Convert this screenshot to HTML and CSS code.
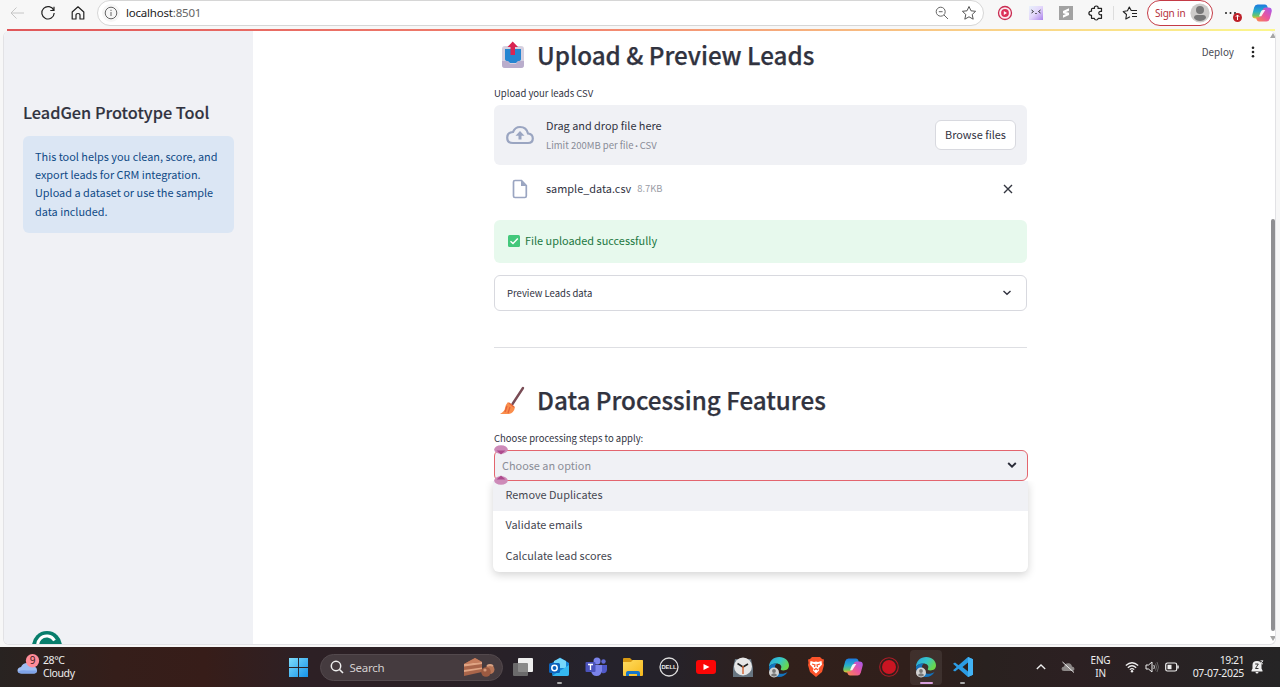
FILE: index.html
```
<!DOCTYPE html>
<html lang="en">
<head>
<meta charset="utf-8">
<title>LeadGen Prototype Tool</title>
<link rel="stylesheet" href="styles.css">
</head>
<body>
<svg class="defs" aria-hidden="true">
  <defs>
    <linearGradient id="edgeA" x1="0" y1="0" x2="1" y2=".5"><stop offset="0" stop-color="#2aa5e0"/><stop offset=".55" stop-color="#36c6c8"/><stop offset="1" stop-color="#6ad64b"/></linearGradient>
    <linearGradient id="cpA" x1="0" y1="0" x2="0" y2="1"><stop offset="0" stop-color="#1b78e0"/><stop offset=".5" stop-color="#28b0c8"/><stop offset=".8" stop-color="#6cc46a"/><stop offset="1" stop-color="#f0c52d"/></linearGradient>
    <linearGradient id="cpB" x1="1" y1="0" x2="0" y2="1"><stop offset="0" stop-color="#a259f2"/><stop offset=".5" stop-color="#e9559f"/><stop offset="1" stop-color="#f98a4b"/></linearGradient>
    <linearGradient id="win" x1="0" y1="0" x2="1" y2="1"><stop offset="0" stop-color="#7edcfb"/><stop offset="1" stop-color="#1593ea"/></linearGradient>
    <linearGradient id="folder" x1="0" y1="0" x2="1" y2="1"><stop offset="0" stop-color="#ffdc61"/><stop offset="1" stop-color="#f7b91c"/></linearGradient>
    <linearGradient id="ext" x1="0" y1="0" x2="1" y2="1"><stop offset="0" stop-color="#e9f1fb"/><stop offset=".5" stop-color="#e3d6fb"/><stop offset="1" stop-color="#ac83ec"/></linearGradient>
    <symbol id="edge" viewBox="0 0 22 22">
      <path d="M1 11C1 5 5.500 1 11.200 1C17 1 21 5 21 9.300C21 12.700 18.500 14.500 15.500 14.500C13 14.500 12.300 13.500 13 12.500C14.300 9.800 11.800 7.500 8.500 7.500C5 7.500 2 9 1 11Z" fill="url(#edgeA)"/>
      <path d="M1 11C2 8.500 5.500 6.800 8.800 7.600C6.500 9 6.300 13 8.500 15.500C11 18.400 15.500 18.500 19.500 16C17.500 19.500 14.500 21 11 21C5.200 21 1 16.500 1 11Z" fill="#1373bd"/>
      <circle cx="6" cy="16.500" r="5" fill="#d3d3d3"/><circle cx="6" cy="15" r="1.900" fill="#777"/><path d="M2.800 19Q6 15.500 9.200 19Q6 22 2.800 19" fill="#777"/>
    </symbol>
    <symbol id="copilot" viewBox="0 0 20 20">
      <path d="M5.500 1.500H13Q14.800 1.500 15.300 3.200L16 5.500H13.300Q11.800 5.500 11.200 7.300L9.300 13.200Q8.500 15.500 6.500 15.500H3.500Q-.3 15.500 .3 11.500L2.200 4.200Q3 1.500 5.500 1.500Z" fill="url(#cpA)"/>
      <path d="M14.500 18.500H7Q5.200 18.500 4.700 16.800L4 14.500H6.700Q8.200 14.500 8.800 12.700L10.700 6.800Q11.500 4.500 13.500 4.500H16.500Q20.300 4.500 19.700 8.500L17.800 15.800Q17 18.500 14.500 18.500Z" fill="url(#cpB)"/>
      <path d="M11 7H13.300L10.900 10.700L9.300 13.200H7L8.800 8.800Q9.500 7 11 7Z" fill="#fff" opacity=".9"/>
    </symbol>
  </defs>
</svg>

<header class="toolbar">
  <svg class="ic back" viewBox="0 0 16 16"><path d="M15 8H2M7.500 2.500L2 8L7.500 13.500" stroke="#c6c6c6"/></svg>
  <svg class="ic reload" viewBox="0 0 16 16"><path d="M13.700 5.300A6.200 6.200 0 1 0 14.200 8M14 1.800V5.500H10.300" stroke="#222" stroke-width="1.200"/></svg>
  <svg class="ic home" viewBox="0 0 16 16"><path d="M2.200 7L8 1.800L13.800 7V14H10V10.200Q10 8.500 8 8.500Q6 8.500 6 10.200V14H2.200Z" stroke="#222" stroke-width="1.200" stroke-linejoin="round"/></svg>
  <div class="address">
    <span class="info-bg"><svg class="ic info" viewBox="0 0 14 14"><circle cx="7" cy="7" r="5.800" stroke="#666"/><path d="M7 6V10M7 3.800V5" stroke="#666"/></svg></span>
    <span class="url">localhost<span class="port">:8501</span></span>
    <svg class="ic zoom" viewBox="0 0 14 14"><circle cx="5.700" cy="5.700" r="4.500" stroke="#666"/><path d="M9 9L13 13M3.800 5.700H7.600" stroke="#666"/></svg>
    <svg class="ic star" viewBox="0 0 16 16"><path d="M8 1.500L10 5.800L14.600 6.300L11.200 9.500L12.200 14.200L8 11.800L3.800 14.200L4.800 9.500L1.400 6.300L6 5.800Z" stroke="#555" stroke-linejoin="round"/></svg>
  </div>
  <div class="extensions">
    <svg class="ic e1" viewBox="0 0 16 16"><circle cx="8" cy="8" r="6.500" fill="#fbeaf0" stroke="#c92c51" stroke-width="1.300"/><circle cx="8" cy="8" r="3.900" fill="#dc2f57"/><path d="M6.800 6L10 8L6.800 10Z" fill="#fff"/></svg>
    <svg class="ic e2" viewBox="0 0 14 14"><rect width="14" height="14" fill="url(#ext)"/><path d="M2.500 4L4.500 5.500L2.500 7M11.500 4L9.500 5.500L11.500 7M6.300 7.500H7.700" stroke="#333"/></svg>
    <svg class="ic e3" viewBox="0 0 14 14"><rect width="14" height="14" fill="#a2a2a2"/><path d="M10 2.300V4.700L4 7.300V5ZM10 6.700V9L4 11.700V9.300ZM4 7.300L7 6L10 6.700L7 8Z" fill="#fff"/></svg>
    <svg class="ic e4" viewBox="0 0 16 16"><path d="M4.500 3.300H6.500Q6 1 8.300 1Q10.600 1 10 3.300H13.500V6.500Q10.800 6 10.800 8.100Q10.800 10.300 13.500 9.700V13.300H10.200Q10 15 8.300 15Q6.500 15 6.300 13.300H3.500V10.300Q.9 10.200 .9 8.200Q.9 6.200 3.500 6.200V4.300Q3.500 3.300 4.500 3.300Z" stroke="#222" stroke-width="1.200" stroke-linejoin="round"/></svg>
    <i class="divider"></i>
    <svg class="ic e5" viewBox="0 0 16 16"><path d="M8 11.800L3.800 14L4.500 9.500L1.200 6.500L5.500 5.800L7.300 2L9.200 5.500H15M10 8.500H15M10 11.500H15" stroke="#222" stroke-width="1.100" stroke-linejoin="round"/></svg>
    <div class="signin"><span>Sign in</span>
      <svg class="ic avatar" viewBox="0 0 20 20"><circle cx="10" cy="10" r="9.600" fill="#cdcbc9"/><circle cx="10" cy="7" r="4" fill="#777"/><path d="M4 15Q4 12 7 12H13Q16 12 16 15Q14 18 10 18Q6 18 4 15" fill="#777"/></svg>
    </div>
    <svg class="ic more" viewBox="0 0 18 16"><g fill="#222"><circle cx="2" cy="6" r="1"/><circle cx="6.500" cy="6" r="1"/><circle cx="11" cy="6" r="1"/></g><circle cx="13.500" cy="10.500" r="4.500" fill="#bd2029"/><path d="M13.500 13V8M11.800 9.800L13.500 8L15.200 9.800" stroke="#fff"/></svg>
    <svg class="ic copilot"><use href="#copilot"/></svg>
  </div>
</header>

<div class="frame">
  <div class="rainbow"></div>
  <div class="app">
    <aside class="sidebar">
      <h3 class="tool-title">LeadGen Prototype Tool</h3>
      <div class="note"><p>This tool helps you clean, score, and</p><p>export leads for CRM integration.</p><p>Upload a dataset or use the sample</p><p>data included.</p></div>
      <svg class="ic grammarly" viewBox="0 0 30 30"><circle cx="15" cy="15" r="15" fill="#087e6c"/><path d="M22.500 9.500A9 9 0 1 0 23.500 16H17.500" stroke="#fff" stroke-width="3"/></svg>
    </aside>
    <main class="main">
      <h2 class="section-title">
        <svg class="ic emoji" viewBox="0 0 26 28"><path d="M5 5H21Q24 5 24 8V24Q24 27 21 27H5Q2 27 2 24V8Q2 5 5 5Z" fill="#d6d0df"/><path d="M2 20H8L10 23H16L18 20H24V24Q24 27 21 27H5Q2 27 2 24Z" fill="#b9adcc"/><path d="M5 8H21V18Q21 20 18 20L16 22H10L8 20Q5 20 5 18Z" fill="#2585d1"/><path d="M12.700 .5L18 6H15V14H10.500V6H7.500Z" fill="#d92452"/></svg>
        <span>Upload &amp; Preview Leads</span>
      </h2>
      <p class="label">Upload your leads CSV</p>
      <div class="uploader">
        <svg class="ic cloud" viewBox="0 0 28 20"><path d="M7 18H22Q26.800 18 26.800 13.500Q26.800 9 22 8.500Q20.500 2 14 2Q9 2 7 7Q1.200 7.500 1.200 12.700Q1.200 18 7 18Z" stroke="#9aa5c1" stroke-width="2.200"/><path d="M14 6L9.500 10.800H12.500V14.500H15.500V10.800H18.500Z" fill="#9aa5c1"/></svg>
        <div class="drop-text"><p class="drop-main">Drag and drop file here</p><p class="drop-sub">Limit 200MB per file <span class="bullet">•</span> CSV</p></div>
        <button class="browse">Browse files</button>
      </div>
      <div class="file">
        <svg class="ic doc" viewBox="0 0 16 20"><path d="M3 1.500H9.500L14.300 6.500V17Q14.300 18.500 12.800 18.500H3Q1.500 18.500 1.500 17V3Q1.500 1.500 3 1.500Z" stroke="#9aa5c1" stroke-width="1.700"/><path d="M9 1.500V7H14.500Z" fill="#9aa5c1"/></svg>
        <span class="filename">sample_data.csv</span><span class="size">8.7KB</span>
        <svg class="ic close" viewBox="0 0 10 10"><path d="M1 1L9 9M9 1L1 9" stroke="#333640" stroke-width="1.400"/></svg>
      </div>
      <div class="success"><svg class="ic check" viewBox="0 0 12 12"><rect width="12" height="12" rx="1.500" fill="#43c87b"/><path d="M2.500 6.200L5 8.500L9.800 3.500" stroke="#fff" stroke-width="1.400"/></svg><span>File uploaded successfully</span></div>
      <div class="expander"><span>Preview Leads data</span><svg class="ic chev" viewBox="0 0 10 8"><path d="M1.500 2L5 5.300L8.500 2" stroke="#31333f" stroke-width="1.400"/></svg></div>
      <hr class="rule">
      <h2 class="section-title second">
        <svg class="ic emoji" viewBox="0 0 26 28"><path d="M23 2L12.500 18" stroke="#794c55" stroke-width="2.400" stroke-linecap="round"/><path d="M8 16L15 21Q14 27 9 28H0Q5 25 5 22Q6 18 8 16Z" fill="#fa8e4c"/><path d="M9 17L14 21M7 20L5 26M10 21L8 27" stroke="#e6643b" stroke-width="1.300"/></svg>
        <span>Data Processing Features</span>
      </h2>
      <p class="label">Choose processing steps to apply:</p>
      <div class="select">
        <span class="placeholder">Choose an option</span>
        <svg class="ic chev" viewBox="0 0 10 8"><path d="M1.200 2L5 5.600L8.800 2" stroke="#292b38" stroke-width="1.900"/></svg>
        <ul class="menu"><li class="active">Remove Duplicates</li><li>Validate emails</li><li>Calculate lead scores</li></ul>
        <svg class="ic handle top" viewBox="0 0 14 10"><ellipse cx="7" cy="4.500" rx="6.800" ry="4.300" fill="#cd8ab8"/><path d="M2.500 5.500H11.500L7 9.500Z" fill="#ad4b8d"/></svg>
        <svg class="ic handle bottom" viewBox="0 0 14 10"><ellipse cx="7" cy="5.500" rx="6.800" ry="4.300" fill="#cd8ab8"/><path d="M2.500 4.500H11.500L7 .5Z" fill="#ad4b8d"/></svg>
      </div>
    </main>
    <div class="app-menu"><span>Deploy</span><svg class="ic dots" viewBox="0 0 4 12"><g fill="#222"><circle cx="2" cy="1.700" r="1.300"/><circle cx="2" cy="6" r="1.300"/><circle cx="2" cy="10.300" r="1.300"/></g></svg></div>
    <div class="scroll"><svg class="ic tri" viewBox="0 0 6 5"><path d="M3 0L6 5H0Z" fill="#a5a5a5"/></svg><i class="thumb"></i><svg class="ic tri" viewBox="0 0 6 5"><path d="M3 5L6 0H0Z" fill="#a5a5a5"/></svg></div>
  </div>
</div>

<footer class="taskbar">
  <div class="weather">
    <svg class="ic wicon" viewBox="0 0 24 24"><path d="M5.500 19.500Q1.500 19.500 1.500 16.500Q1.500 13.500 5 13Q7 8.500 12 9Q16 9.500 17 12.500Q21 12.500 21 16.500Q21 19.500 18 19.500Z" fill="#9fbdf3"/><path d="M2 17.500Q6 15.500 11 16.500H21Q20.500 19.500 18 19.500H5.500Q2.500 19.500 2 17.500Z" fill="#7fa3e8"/><circle cx="16.500" cy="6.800" r="6.700" fill="#ff8c99"/><text x="16.500" y="10.300" text-anchor="middle" class="badge-text">9</text></svg>
    <div class="wtext"><p>28°C</p><p class="cloudy">Cloudy</p></div>
  </div>
  <svg class="ic start" viewBox="0 0 20 20"><path d="M0 0H9.500V9.500H0ZM10.500 0H20V9.500H10.500ZM0 10.500H9.500V20H0ZM10.500 10.500H20V20H10.500Z" fill="url(#win)"/></svg>
  <div class="search">
    <svg class="ic mag" viewBox="0 0 14 14"><circle cx="6" cy="6" r="4.700" stroke="#eee" stroke-width="1.500"/><path d="M9.500 9.500L13 13" stroke="#eee" stroke-width="1.600"/></svg>
    <span>Search</span>
    <svg class="ic cake" viewBox="0 0 32 20"><path d="M1 7L12 1L19 5V15L1 19Z" fill="#a9654a"/><path d="M1 7L19 5V7L1 9.500ZM1 13L19 10.500V12L1 15Z" fill="#e0a483"/><path d="M1 7L12 1L19 5Z" fill="#c57d5d"/><circle cx="27" cy="12.500" r="4.500" fill="#b87556"/><circle cx="23" cy="15" r="4.800" fill="#9c5a41"/><circle cx="22" cy="13" r="1.600" fill="#d49a7b"/><path d="M24 9Q27 7 30 9" stroke="#d8a283" stroke-width="2"/></svg>
  </div>
  <nav class="apps">
    <span class="app-ic"><svg class="ic" viewBox="0 0 22 22"><rect x="6" y="2" width="15" height="14" rx="1" fill="#eee"/><rect x="1" y="7" width="15" height="13" rx="1" fill="#777" opacity=".85"/></svg></span>
    <span class="app-ic run"><svg class="ic" viewBox="0 0 22 22"><path d="M4 7L12 1.500L21 7V18Q21 20 19 20H6Q4 20 4 18Z" fill="#1685d8"/><path d="M6 5L12 2L18 5V12H6Z" fill="#75d7fb"/><path d="M4 20L21 9V18Q21 20 19 20Z" fill="#35b9f1"/><rect x="1" y="7" width="11" height="10" rx="1.500" fill="#0b63bc"/><circle cx="6.500" cy="12" r="2.700" stroke="#fff" stroke-width="1.500"/></svg></span>
    <span class="app-ic"><svg class="ic" viewBox="0 0 22 22"><circle cx="12" cy="5" r="3.500" fill="#7b83eb"/><circle cx="18.500" cy="5.500" r="2.200" fill="#6169d3"/><path d="M14 9H22V14Q21 18 17 17Z" fill="#5059c9"/><path d="M6 9H17V15Q16 20 11.500 20Q7 20 6 15Z" fill="#7b83eb"/><rect x=".5" y="6" width="10" height="10" rx="1" fill="#4b53bc"/><path d="M3 8.500H8M5.500 8.500V14" stroke="#fff" stroke-width="1.300"/></svg></span>
    <span class="app-ic"><svg class="ic" viewBox="0 0 22 22"><path d="M1 3Q1 2 2 2H8L10 4H20Q21 4 21 5V12H1Z" fill="#d99a13"/><path d="M1 6H9L11 4H20Q21 4 21 5V19Q21 20 20 20H2Q1 20 1 19Z" fill="url(#folder)"/><path d="M4 20V17Q4 15 6 15H16Q18 15 18 17V20H15V18H7V20Z" fill="#1676ca"/></svg></span>
    <span class="app-ic"><svg class="ic" viewBox="0 0 22 22"><circle cx="11" cy="11" r="9" stroke="#ddd" stroke-width="1.300"/><text x="11" y="13.300" text-anchor="middle" class="dell">DELL</text></svg></span>
    <span class="app-ic"><svg class="ic" viewBox="0 0 22 22"><rect x="1" y="4" width="20" height="14" rx="3" fill="#fb0606"/><path d="M8.500 8L14.500 11L8.500 14Z" fill="#fff"/></svg></span>
    <span class="app-ic"><svg class="ic" viewBox="0 0 22 22"><path d="M1 21V12L3 3H19L21 12V21Z" fill="#677581"/><circle cx="11" cy="10.500" r="9" fill="#e6e6e6"/><path d="M5.500 7.500L11 11L16 8" stroke="#222" stroke-width="1.600"/><path d="M11 10V18" stroke="#d36a3b" stroke-width="1.500"/></svg></span>
    <span class="app-ic"><svg class="ic"><use href="#edge"/></svg></span>
    <span class="app-ic"><svg class="ic" viewBox="0 0 22 22"><path d="M7 1H15L17 3L19 3.500L18.500 7L19 9L17 16L11 21L5 16L3 9L3.500 7L3 3.500L5 3Z" fill="#fb542b"/><path d="M5.500 5L9 6L11 5.500L13 6L16.500 5L17 8.500L13.500 12.500L14 14.500L11 17.500L8 14.500L8.500 12.500L5 8.500Z" fill="#fff"/><path d="M7 8L10 9L9.500 11M15 8L12 9L12.500 11M9 14L11 12.500L13 14" stroke="#fb542b" stroke-width="1.200"/></svg></span>
    <span class="app-ic"><svg class="ic"><use href="#copilot" x="1" y="1" width="20" height="20"/></svg></span>
    <span class="app-ic"><svg class="ic" viewBox="0 0 22 22"><circle cx="11" cy="11" r="9.300" stroke="#a91d27" stroke-width="1.100"/><circle cx="11" cy="11" r="7" fill="#c91522"/></svg></span>
    <span class="app-ic current"><svg class="ic"><use href="#edge"/></svg></span>
    <span class="app-ic run"><svg class="ic" viewBox="0 0 22 22"><path d="M16 1L21 3.300V18.700L16 21L6.500 12.800L3 15.500L1 14.300L4.700 11L1 7.700L3 6.500L6.500 9.200ZM16 6.500L10.500 11L16 15.500Z" fill="#2b9ce4" fill-rule="evenodd"/><path d="M16 1L21 3.300V18.700L16 21Z" fill="#42b3f5"/></svg></span>
  </nav>
  <div class="tray">
    <svg class="ic up" viewBox="0 0 10 6"><path d="M.8 5L5 1L9.200 5" stroke="#eee" stroke-width="1.300"/></svg>
    <svg class="ic onedrive" viewBox="0 0 14 12"><path d="M3 10Q.5 10 .5 7.800Q.5 5.800 3 5.500Q4 2 7.500 2.200Q10.500 2.500 11 5.500Q13.500 5.800 13.500 8Q13.500 10 11 10Z" fill="#8d8988"/><path d="M1.500 1L13 11.500" stroke="#eee"/></svg>
    <div class="lang"><p>ENG</p><p>IN</p></div>
    <svg class="ic wifi" viewBox="0 0 14 12"><path d="M.8 4.500Q7-1 13.200 4.500M2.800 6.700Q7 2.800 11.200 6.700M4.800 8.700Q7 6.500 9.200 8.700" stroke="#eee" stroke-width="1.200"/><circle cx="7" cy="10.200" r="1.200" fill="#eee"/></svg>
    <svg class="ic vol" viewBox="0 0 14 12"><path d="M1 4H3.500L7 1V11L3.500 8H1Z" stroke="#eee"/><path d="M8.800 4Q10 6 8.800 8" stroke="#ddd"/><path d="M10.500 2.500Q12.500 6 10.500 9.500M12 1Q15 6 12 11" stroke="#777" stroke-width=".8"/></svg>
    <svg class="ic bat" viewBox="0 0 14 10"><rect x=".7" y="1" width="11" height="8" rx="1.800" stroke="#eee" stroke-width="1.200"/><rect x="2.500" y="2.800" width="4" height="4.400" fill="#eee"/><path d="M13 3.500V6.500" stroke="#eee" stroke-width="1.500"/></svg>
    <div class="clock"><p>19:21</p><p class="date">07-07-2025</p></div>
    <svg class="ic bell" viewBox="0 0 13 14"><path d="M.5 10.500L1.500 8.500V5Q1.500 1 6 1Q10.500 1 10.500 5V8.500L11.500 10.500V11.500H.5ZM4.500 12H7.500Q7.500 13.500 6 13.500Q4.500 13.500 4.500 12" fill="#eee"/><path d="M4.200 4H7.300L4.500 8.500H7.500" stroke="#333"/><path d="M9.500 .8H12L9.500 3.800H12" stroke="#eee" stroke-width=".9"/></svg>
  </div>
</footer>
</body>
</html>
```
FILE: styles.css
```
* { box-sizing: border-box; }
body { margin: 0; width: 1280px; height: 687px; overflow: hidden; display: flex; flex-direction: column; background: #f7f7f7; color: #31333f; font-family: "Noto Sans CJK SC", "Noto Sans", sans-serif; }
p, h2, h3, ul { margin: 0; padding: 0; }
p, span, li, button, h2, h3 { white-space: nowrap; }
.defs { position: absolute; width: 0; height: 0; }
.ic { display: block; flex: none; fill: none; }

.toolbar { display: flex; align-items: center; flex: none; height: 29px; padding: 0 0 3px 9px; font-family: "Noto Sans", sans-serif; }
.back { width: 16px; height: 16px; }
.reload { width: 16px; height: 16px; margin-left: 15px; }
.home { width: 16px; height: 16px; margin-left: 14px; }
.address { display: flex; align-items: center; width: 887px; height: 26px; margin-left: 11px; padding: 0 6px 0 4px; background: #fff; border: 1px solid #d6d6d6; border-radius: 13px; }
.info-bg { display: grid; place-items: center; width: 18px; height: 18px; border-radius: 9px; background: #f6f6f6; }
.info { width: 14px; height: 14px; }
.url { flex: 1; margin-left: 6px; padding-bottom: 1px; font-size: 11.5px; letter-spacing: -.2px; color: #222; }
.port { color: #666; }
.zoom { width: 14px; height: 14px; }
.star { width: 16px; height: 16px; margin-left: 12px; }
.extensions { display: flex; align-items: center; height: 26px; }
.e1 { width: 16px; height: 16px; margin-left: 13px; }
.e2 { width: 14px; height: 14px; margin-left: 16px; }
.e3 { width: 14px; height: 14px; margin-left: 16px; }
.e4 { width: 16px; height: 16px; margin-left: 15px; }
.divider { width: 1px; height: 14px; margin-left: 9px; background: #ddd; }
.e5 { width: 16px; height: 16px; margin-left: 8px; }
.signin { display: flex; align-items: center; justify-content: space-between; width: 66px; height: 26px; margin-left: 9px; padding: 0 2px 0 7px; border: 1px solid #c43b46; border-radius: 13px; background: #fff; color: #b5303a; font-size: 10px; letter-spacing: -.2px; }
.avatar { width: 20px; height: 20px; }
.more { width: 18px; height: 16px; margin-left: 11px; margin-top: 4px; }
.toolbar .copilot { width: 20px; height: 20px; margin-left: 10px; }

.frame { display: flex; flex-direction: column; flex: none; height: 616px; margin: 0 4px 0 3px; }
.rainbow { flex: none; height: 2px; margin: 0 1px 0 4px; background: linear-gradient(90deg, #e0575a, #f2846f 45%, #f9cd87 75%, #fbf78d); }
.app { display: flex; position: relative; height: 614px; overflow: hidden; background: #fff; border: 1px solid #e2e2e5; border-top: 0; border-radius: 6px; }
.sidebar { display: flex; flex-direction: column; width: 249px; padding: 71px 19px 0; background: #f0f1f5; }
.tool-title { height: 20px; font-size: 16.3px; line-height: 20px; font-weight: 500; -webkit-text-stroke: .15px; }
.note { width: 211px; height: 97px; margin-top: 14px; padding: 11px 12px; border-radius: 6px; background: #dbe6f4; color: #0f4a86; font-size: 10.9px; line-height: 18.2px; }
.grammarly { width: 30px; height: 30px; margin: auto 0 -17px 9px; }
.main { width: 533px; margin-left: 241px; display: flex; flex-direction: column; }
.section-title { display: flex; align-items: center; height: 36px; margin-top: 6px; padding-left: 6px; font-size: 24.2px; line-height: 36px; font-weight: 500; -webkit-text-stroke: .25px; }
.section-title span { padding-bottom: 1px; }
.emoji { width: 26px; height: 28px; margin-right: 11px; }
.label { height: 16px; margin-top: 12px; font-size: 9.5px; line-height: 16px; }
.uploader { display: flex; align-items: center; height: 60px; margin-top: 4px; padding: 0 11px 0 12px; border-radius: 6px; background: #f0f1f5; }
.cloud { width: 28px; height: 20px; }
.drop-text { flex: 1; padding: 1px 0 0 12px; }
.drop-main { font-size: 10.9px; line-height: 19px; }
.drop-sub { font-size: 9.5px; line-height: 20px; color: #898c97; }
.bullet { font-family: "Open Sans", sans-serif; font-size: 8px; margin: 0 -.5px; }
.browse { width: 81px; height: 30px; padding: 0 0 2px; border: 1px solid #d8d9df; border-radius: 6px; background: #fff; color: #31333f; font: 10.9px/20px "Noto Sans CJK SC", sans-serif; }
.file { display: flex; align-items: center; height: 24px; margin-top: 12px; padding: 0 14px 0 18px; font-size: 10.9px; line-height: 20px; }
.doc { width: 16px; height: 20px; }
.filename { margin: -3px 6px 0 18px; }
.size { flex: 1; margin-top: -2px; font-size: 9.4px; color: #999ca5; }
.close { width: 10px; height: 10px; }
.success { display: flex; align-items: center; height: 43px; margin-top: 19px; padding: 0 14px 2px; border-radius: 6px; background: #e7f9ed; color: #217741; font-size: 10.9px; line-height: 20px; }
.success span { padding-bottom: 2px; }
.check { width: 12px; height: 12px; margin-right: 5px; }
.expander { display: flex; align-items: center; justify-content: space-between; height: 36px; margin-top: 12px; padding: 0 14px 1px 12px; border: 1px solid #d8d9df; border-radius: 6px; font-size: 9.5px; }
.chev { width: 10px; height: 8px; }
.rule { width: 100%; height: 1px; margin: 36px 0 0; border: 0; background: #dedfe3; flex: none; }
.second { margin-top: 34px; }
.select { position: relative; display: flex; align-items: center; justify-content: space-between; width: 534px; height: 31px; margin-top: 4px; padding: 0 10px 1px 7px; border: 1px solid #e3656e; border-radius: 6px; background: #f0f1f5; color: #8a8d97; font-size: 10.9px; }
.placeholder { padding-bottom: 1px; }
.menu { position: absolute; z-index: 1; top: 30px; left: -2px; width: 535px; height: 91px; border-radius: 0 0 6px 6px; background: #fff; box-shadow: 0 3px 9px rgba(0,0,0,.17); clip-path: inset(0 -15px -18px -15px); list-style: none; color: #454751; }
.menu li { height: 30.3px; padding-left: 12.500px; line-height: 27.5px; }
.menu .active { background: #f0f1f5; }
.handle { position: absolute; z-index: 2; left: -1px; width: 14px; height: 10px; }
.handle.top { top: -6px; }
.handle.bottom { bottom: -5px; }
.app-menu { position: absolute; top: 12px; right: 20px; display: flex; align-items: center; gap: 17px; height: 18px; font-size: 9.9px; color: #484a53; }
.app-menu span { padding-bottom: 1px; }
.dots { width: 4px; height: 12px; }
.scroll { position: absolute; top: 1px; bottom: 2px; right: -1px; width: 6px; display: flex; flex-direction: column; align-items: center; padding: 1px 0; }
.tri { width: 6px; height: 5px; }
.thumb { width: 4px; height: 412px; margin: 181px 0 auto; border-radius: 2px; background: #8f8f92; }

.taskbar { display: flex; align-items: center; flex: none; height: 40px; margin-top: 2px; background: linear-gradient(90deg, #282321 0, #351e1a 9%, #371d19 16%, #2d2025 24%, #2b2025 33%, #25222b 46%, #25222a 52%, #31201b 61%, #301f1b 71%, #29211f 77%, #2c2022 84%, #252425 100%); color: #eee; font-family: "Noto Sans", sans-serif; font-size: 10.500px; }
.taskbar p { line-height: 13px; height: 13px; }
.weather { display: flex; align-items: center; width: 288.500px; padding-left: 16px; }
.wicon { width: 24px; height: 24px; margin-top: -2px; }
.badge-text { font: 10px "Noto Sans", sans-serif; fill: #402020; }
.wtext { margin-left: 3px; letter-spacing: -.4px; }
.cloudy { letter-spacing: -.4px; }
.start { width: 19px; height: 19px; }
.search { display: flex; align-items: center; width: 183px; height: 27px; margin-left: 12px; padding: 0 7px 0 9px; border: 1px solid #53494d; border-radius: 14px; background: #453b3f; color: #d2cece; font-size: 11.500px; letter-spacing: -.25px; }
.search span { flex: 1; margin-left: 6px; }
.mag { width: 14px; height: 14px; }
.cake { width: 32px; height: 20px; }
.apps { display: flex; margin-left: 2px; }
.app-ic { position: relative; display: grid; place-items: center; width: 36.650px; height: 40px; }
.app-ic .ic { width: 22px; height: 22px; }
.app-ic.run::after, .app-ic.current::after { content: ""; position: absolute; bottom: 3px; left: 16px; width: 5px; height: 2px; border-radius: 1px; background: #aaa; }
.app-ic.current::before { content: ""; position: absolute; inset: 3px 2px 2px; border-radius: 4px; background: #ffffff14; }
.app-ic.current::after { left: 12px; width: 13px; background: #d8a0dd; }
.app-ic.current .ic { position: relative; }
.dell { font: bold 5.800px "Liberation Sans", sans-serif; fill: #eee; }
.tray { display: flex; align-items: center; margin-left: auto; padding-right: 16px; }
.up { width: 10px; height: 6px; }
.onedrive { width: 14px; height: 12px; margin-left: 15px; }
.lang { width: 21px; margin-left: 15px; text-align: center; font-size: 10px; letter-spacing: -.2px; }
.wifi { width: 14px; height: 12px; margin-left: 14px; }
.vol { width: 14px; height: 12px; margin-left: 6px; }
.bat { width: 14px; height: 10px; margin-left: 6px; }
.clock { width: 58px; margin-left: 7px; text-align: right; display: flex; flex-direction: column; align-items: flex-end; letter-spacing: -.5px; }
.date { letter-spacing: -.35px; }
.bell { width: 13px; height: 14px; margin-left: 7px; }
```
